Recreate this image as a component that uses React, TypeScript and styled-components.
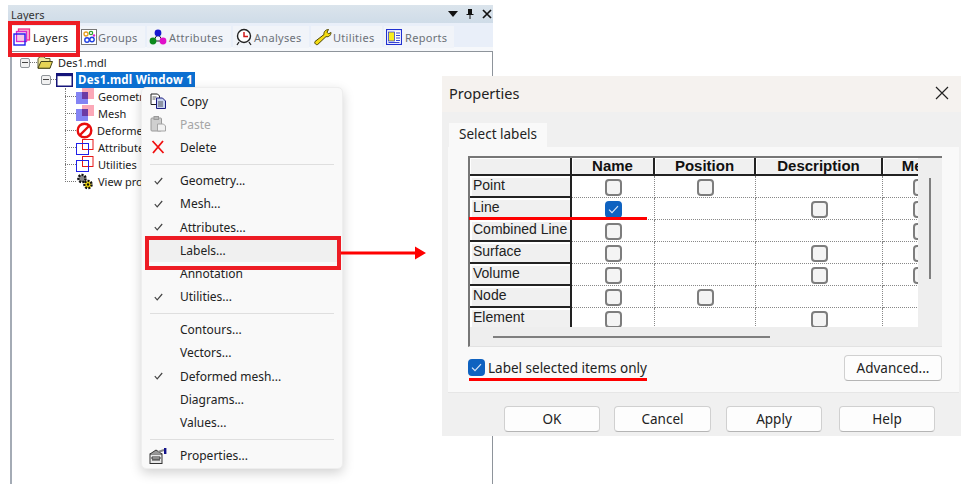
import React from "react";
import styled, { createGlobalStyle } from "styled-components";

const GlobalStyle = createGlobalStyle`
  html, body {
    margin: 0;
    padding: 0;
    background: #fff;
    font-family: "Noto Sans", "Open Sans", sans-serif;
  }
`;

const Page = styled.div`
  position: relative;
  width: 975px;
  height: 489px;
  overflow: hidden;
  background: #fff;
  padding: 5px 0 0 8px;
  box-sizing: border-box;
`;

/* ---------- left docked panel ---------- */

const Panel = styled.div`
  width: 485px;
  height: 479px;
  display: flex;
  flex-direction: column;
`;

const TitleBar = styled.div`
  height: 18px;
  flex: none;
  display: flex;
  align-items: center;
  padding: 0 1px 0 3px;
  background: linear-gradient(#dbe4ec, #cfdce8);
  color: #333;
  font-size: 11px;
`;

const TitleText = styled.span`
  flex: 1;
`;

const TitleButtons = styled.div`
  display: flex;
  align-items: center;
  gap: 8px;
`;

const TabBar = styled.div`
  height: 28px;
  flex: none;
  display: flex;
  padding: 3px 0 0 3px;
  box-sizing: border-box;
  background: linear-gradient(#e9eff9 0 24px, #f6f8fb 24px);
`;

const TabItem = styled.div<{ $w: number; $active?: boolean; $gap?: number }>`
  width: ${(p) => p.$w}px;
  height: ${(p) => (p.$active ? 25 : 22)}px;
  margin-right: 2px;
  flex: none;
  display: flex;
  align-items: center;
  gap: ${(p) => p.$gap ?? 2}px;
  padding: ${(p) => (p.$active ? "0 0 3px 2px" : "0 0 0 2px")};
  box-sizing: border-box;
  background: ${(p) => (p.$active ? "#fff" : "#f1f4f9")};
  color: ${(p) => (p.$active ? "#222" : "#6c7178")};
  font-size: 11px;
  letter-spacing: 0.3px;
`;

const TreeBox = styled.div`
  flex: 1;
  margin-left: 2px;
  padding-top: 2px;
  background: #fff;
  border-top: 1px solid #8e949b;
  border-left: 2px solid #a4abb5;
  border-right: 1px solid #8e949b;
  box-sizing: border-box;
  min-height: 0;
  font-size: 11px;
  color: #222;
`;

const TreeRow = styled.div<{ $indent: number }>`
  height: 17px;
  display: flex;
  align-items: center;
  padding-left: ${(p) => p.$indent}px;
`;

const ExpandBox = styled.span`
  width: 10px;
  height: 10px;
  flex: none;
  box-sizing: border-box;
  border: 1px solid #8f9499;
  border-radius: 2px;
  background: #f1f1f1;
  display: flex;
  align-items: center;
  justify-content: center;
  &::after {
    content: "";
    width: 6px;
    height: 1px;
    background: #444;
  }
`;

const Connector = styled.span<{ $w: number }>`
  width: ${(p) => p.$w}px;
  flex: none;
  border-top: 1px dotted #777;
`;

const TreeLabel = styled.span<{ $ml: number }>`
  margin-left: ${(p) => p.$ml}px;
  white-space: nowrap;
`;

const SelectedLabel = styled.span`
  margin-left: 3px;
  width: 119px;
  height: 16px;
  line-height: 16px;
  text-align: center;
  background: #0b6fd1;
  color: #fff;
  font-weight: 700;
  font-size: 11.5px;
  letter-spacing: 0.2px;
  white-space: nowrap;
`;

const ChildList = styled.div`
  position: relative;
  margin-left: 53px;
  &::before {
    content: "";
    position: absolute;
    left: 0;
    top: 0;
    bottom: 8px;
    border-left: 1px dotted #777;
  }
`;

/* ---------- context menu ---------- */

const ContextMenu = styled.div`
  position: absolute;
  left: 141px;
  top: 87px;
  width: 202px;
  height: 382px;
  box-sizing: border-box;
  padding-top: 1.5px;
  background: #f9f9f9;
  border: 1px solid #eeeeee;
  border-radius: 5px;
  box-shadow: 0 4px 12px rgba(0, 0, 0, 0.18);
  font-size: 12px;
  color: #222;
`;

const MenuItem = styled.div<{ $disabled?: boolean; $hover?: boolean }>`
  height: 23.2px;
  display: flex;
  align-items: center;
  margin: 0 4px;
  background: ${(p) => (p.$hover ? "#f0f0f0" : "transparent")};
  color: ${(p) => (p.$disabled ? "#a6a6a6" : "#222")};
`;

const MenuIcon = styled.span`
  width: 34px;
  flex: none;
  display: flex;
  align-items: center;
  justify-content: center;
  padding-right: 10px;
  box-sizing: border-box;
`;

const MenuSep = styled.div`
  height: 1px;
  margin: 4.5px 8px 4.5px 8px;
  background: #dfdfdf;
`;

/* ---------- properties dialog ---------- */

const Dialog = styled.div`
  position: absolute;
  left: 442px;
  top: 76px;
  width: 519px;
  height: 360px;
  background: #f0f0f0;
  border-radius: 0 5px 0 0;
  display: flex;
  flex-direction: column;
`;

const DialogTitle = styled.div`
  height: 36px;
  flex: none;
  display: flex;
  align-items: center;
  justify-content: space-between;
  padding: 0 12px 3px 7px;
  box-sizing: border-box;
  background: #f5f2ef;
  font-size: 14.5px;
  color: #222;
`;

const DialogTabs = styled.div`
  padding: 11px 0 0 7px;
`;

const DialogTab = styled.div`
  width: 98px;
  height: 24px;
  line-height: 23px;
  text-align: center;
  background: #f9f9f9;
  font-size: 13.5px;
  color: #222;
`;

const TabPage = styled.div`
  width: 511px;
  height: 246px;
  margin-left: 6px;
  flex: none;
  box-sizing: border-box;
  padding: 9px 17px 0 20px;
  background: #f9f9f9;
  border-bottom: 1px solid #e6e6e6;
`;

const GridBox = styled.div`
  width: 474px;
  height: 191px;
  display: flex;
  flex-direction: column;
  box-sizing: border-box;
  background: #eeeeee;
  border-top: 2px solid #777;
  border-left: 2px solid #777;
  border-bottom: 1px solid #e2e2e2;
`;

const GridTop = styled.div`
  height: 169px;
  flex: none;
  display: flex;
`;

const Table = styled.div`
  width: 448px;
  height: 169px;
  flex: none;
  overflow: hidden;
  background: #fff;
  display: grid;
  grid-template-columns: 102px 83px 101px 127px 78px;
  grid-template-rows: 18px repeat(7, 22px);
`;

const HeaderCell = styled.div`
  background: #f0f0f0;
  border-right: 2px solid #222;
  border-bottom: 2px solid #222;
  box-shadow: inset 1px 1px 0 #fff;
  box-sizing: border-box;
  text-align: center;
  line-height: 16px;
  font-family: "Liberation Sans", Arial, sans-serif;
  font-weight: 700;
  font-size: 15px;
  color: #111;
  overflow: hidden;
  white-space: nowrap;
`;

const RowHead = styled.div`
  background: #f0f0f0;
  border-right: 2px solid #222;
  border-bottom: 2px solid #222;
  box-shadow: inset 2px 2px 0 #fff;
  box-sizing: border-box;
  padding-left: 3px;
  line-height: 18px;
  font-family: "Liberation Sans", Arial, sans-serif;
  font-size: 14px;
  color: #222;
  white-space: nowrap;
`;

const Cell = styled.div`
  box-sizing: border-box;
  padding-top: 2px;
  border-right: 1px dotted #888;
  border-bottom: 1px dotted #888;
  display: flex;
  align-items: center;
  justify-content: center;
`;

const CheckBox = styled.span<{ $on?: boolean }>`
  width: 17px;
  height: 17px;
  flex: none;
  box-sizing: border-box;
  border-radius: 4px;
  border: 2px solid ${(p) => (p.$on ? "#0f62c0" : "#7d7d7d")};
  background: ${(p) => (p.$on ? "#0f62c0" : "#f4f4f4")};
  display: flex;
  align-items: center;
  justify-content: center;
`;

const VScrollTrack = styled.div`
  flex: 1;
  display: flex;
  justify-content: center;
  padding: 20px 1px 0 0;
`;

const VThumb = styled.div`
  width: 2px;
  height: 101px;
  background: #7f7f7f;
`;

const HScrollTrack = styled.div`
  flex: 1;
  padding: 9px 0 0 23px;
`;

const HThumb = styled.div`
  width: 277px;
  height: 2px;
  background: #7f7f7f;
`;

const OptionRow = styled.div`
  margin-top: 8px;
  width: 474px;
  height: 25px;
  display: flex;
  align-items: center;
  justify-content: space-between;
`;

const OptionLabel = styled.label`
  display: flex;
  align-items: center;
  gap: 3px;
  font-size: 13.5px;
  color: #222;
`;

const Button = styled.div<{ $w: number; $ml?: number }>`
  width: ${(p) => p.$w}px;
  height: 26px;
  margin-left: ${(p) => p.$ml ?? 0}px;
  box-sizing: border-box;
  border: 1px solid #d0d0d0;
  border-bottom-color: #b5b5b5;
  border-radius: 4px;
  background: #fdfdfd;
  text-align: center;
  line-height: 24px;
  font-size: 13.5px;
  color: #222;
`;

const ButtonRow = styled.div`
  display: flex;
  gap: 14px;
  padding: 13px 0 0 62px;
`;

/* ---------- red annotations over the screenshot ---------- */

const RedBox = styled.div<{ $l: number; $t: number; $w: number; $h: number }>`
  position: absolute;
  left: ${(p) => p.$l}px;
  top: ${(p) => p.$t}px;
  width: ${(p) => p.$w}px;
  height: ${(p) => p.$h}px;
  box-sizing: border-box;
  border: 4px solid #ed1c24;
`;

const RedLine = styled.div<{ $t: number }>`
  position: absolute;
  left: 469px;
  top: ${(p) => p.$t}px;
  width: 178px;
  height: 3px;
  background: #f00;
`;

const ArrowSvg = styled.svg`
  position: absolute;
  left: 341px;
  top: 245px;
`;

/* ---------- icons ---------- */

const Ico = styled.svg`
  flex: none;
  display: block;
`;

const LayersIcon = () => (
  <Ico width="18" height="19" viewBox="0 0 18 19">
    <rect x="5.5" y="1" width="11" height="11" fill="#fbb4d4" stroke="#f0308c" strokeWidth="1.3" />
    <rect x="3.5" y="3.5" width="10" height="10" fill="#f6c8ea" stroke="#d828d0" strokeWidth="1.3" />
    <rect x="1" y="6" width="11" height="11" fill="none" stroke="#2020f0" strokeWidth="1.4" />
  </Ico>
);

const GroupsIcon = () => (
  <Ico width="16" height="16" viewBox="0 0 16 16">
    <rect x="0.5" y="0.5" width="15" height="15" fill="#fff" stroke="#777" />
    <circle cx="5" cy="5" r="2" fill="none" stroke="#e8a020" strokeWidth="1.3" />
    <circle cx="10" cy="4" r="1.7" fill="none" stroke="#30a030" strokeWidth="1.2" />
    <circle cx="13" cy="6.5" r="1.2" fill="#e020d0" />
    <circle cx="6" cy="11" r="2.2" fill="none" stroke="#2040e0" strokeWidth="1.4" />
    <circle cx="11" cy="10.5" r="2.2" fill="none" stroke="#2040e0" strokeWidth="1.4" />
  </Ico>
);

const AttributesIcon = () => (
  <Ico width="18" height="16" viewBox="0 0 18 16">
    <path d="M9 5 4 12M9 5l5 7M4 12h10" stroke="#222" fill="none" />
    <circle cx="9" cy="4" r="3.4" fill="#1818d0" />
    <circle cx="4" cy="12" r="3.4" fill="#0c8a1c" />
    <circle cx="14" cy="12" r="3.4" fill="#e010c8" />
  </Ico>
);

const AnalysesIcon = () => (
  <Ico width="18" height="18" viewBox="0 0 18 18">
    <circle cx="9" cy="8" r="6.5" fill="#fff" stroke="#222" strokeWidth="1.4" />
    <path d="M9 4v4.5h4" fill="none" stroke="#d01818" strokeWidth="1.5" />
    <path d="M4 14l-2 3M14 14l2 3" stroke="#222" strokeWidth="1.3" />
  </Ico>
);

const WrenchIcon = () => (
  <Ico width="19" height="18" viewBox="0 0 19 18">
    <path
      d="M2 13.5 11 6.5C10.5 4 12.5 1.5 15.5 1.5L14 4.2l1.6 1.6L18 4.5C18 7.5 15.5 9.3 13 8.6L5 16.2C3.5 17.8.8 15 2 13.5Z"
      fill="#f4dc14"
      stroke="#4a4200"
      strokeWidth="1"
    />
  </Ico>
);

const ReportsIcon = () => (
  <Ico width="16" height="16" viewBox="0 0 16 16">
    <rect x="0.5" y="0.5" width="15" height="15" fill="#fff" stroke="#2030d0" strokeWidth="1.2" />
    <rect x="2.5" y="3" width="6" height="9" fill="#f8ee20" stroke="#2030d0" strokeWidth="0.7" />
    <path d="M10 4h4M10 6.5h4M10 9h4M10 11.5h4M2.5 13.5h11" stroke="#2030d0" strokeWidth="0.9" />
  </Ico>
);

const FolderIcon = () => (
  <Ico width="16" height="13" viewBox="0 0 16 13">
    <path d="M1 2.5 3 .8h4l1.5 1.7h4.5v9.7H1Z" fill="#f0e89c" stroke="#5a5a30" />
    <path d="M1 12.2 4 5.5h11.5l-2.5 6.7Z" fill="#e6d454" stroke="#44441c" />
  </Ico>
);

const WindowIcon = () => (
  <Ico width="17" height="14" viewBox="0 0 17 14">
    <rect x="0.75" y="0.75" width="15.5" height="12.5" fill="#fff" stroke="#15157a" strokeWidth="1.5" />
    <rect x="0.75" y="0.75" width="15.5" height="2.4" fill="#15157a" />
  </Ico>
);

const SolidLayerIcon = () => (
  <Ico width="18" height="17" viewBox="0 0 18 17">
    <rect x="6" y="0" width="12" height="11" fill="#fba8b8" />
    <rect x="0" y="4" width="12" height="12" fill="#8484f4" />
    <rect x="6" y="4" width="6" height="7" fill="#6c3aa4" />
  </Ico>
);

const NoIcon = () => (
  <Ico width="17" height="17" viewBox="0 0 17 17">
    <circle cx="8.5" cy="8.5" r="6.8" fill="#fff" stroke="#e80c0c" strokeWidth="2.4" />
    <path d="M4 13 13 4" stroke="#e80c0c" strokeWidth="2.4" />
  </Ico>
);

const OutlineLayerIcon = () => (
  <Ico width="18" height="17" viewBox="0 0 18 17">
    <rect x="6.5" y="0.5" width="10.5" height="10" fill="none" stroke="#e81818" />
    <rect x="0.5" y="4.5" width="12" height="11" fill="none" stroke="#2020e8" />
  </Ico>
);

const GearsIcon = () => (
  <Ico width="18" height="17" viewBox="0 0 18 17">
    <circle cx="6" cy="5.5" r="3.6" fill="#888" stroke="#111" strokeWidth="2.4" strokeDasharray="2 1.2" />
    <circle cx="12" cy="11.5" r="3.6" fill="#f2d80c" stroke="#111" strokeWidth="2.4" strokeDasharray="2 1.2" />
    <circle cx="12" cy="11.5" r="1.2" fill="#111" />
  </Ico>
);

const CopyIcon = () => (
  <Ico width="17" height="16" viewBox="0 0 17 16">
    <path d="M1 1h6.5l2 2v8.5H1Z" fill="#fff" stroke="#222" />
    <path d="M6.5 5h6l3 3v7.5h-9Z" fill="#c8d4f0" stroke="#1a1a80" />
    <path d="M8 9h5M8 11h5M8 13h5M2.5 4h4M2.5 6h3" stroke="#333" strokeWidth="0.8" />
  </Ico>
);

const PasteIcon = () => (
  <Ico width="17" height="16" viewBox="0 0 17 16">
    <rect x="1" y="2" width="10.5" height="13" rx="1" fill="#cfcfcf" stroke="#9a9a9a" />
    <rect x="4" y="0.5" width="4.5" height="3" fill="#b8b8b8" stroke="#9a9a9a" />
    <path d="M7.5 8h6l2 2v5h-8Z" fill="#f1f1f1" stroke="#a5a5a5" />
  </Ico>
);

const DeleteIcon = () => (
  <Ico width="14" height="14" viewBox="0 0 14 14">
    <path d="M1.5 1 12.5 13M12 1 2 13" stroke="#f01010" strokeWidth="1.8" fill="none" />
  </Ico>
);

const PropertiesIcon = () => (
  <Ico width="18" height="16" viewBox="0 0 18 16">
    <rect x="1" y="6" width="12" height="9.5" fill="#e8e8e8" stroke="#333" />
    <path d="M1 6 7 2l6 4" fill="#999" stroke="#333" />
    <path d="M3 9h8v2H3ZM3 12h8" stroke="#333" fill="none" />
    <path d="M9 4l6-2" stroke="#888" strokeWidth="2" />
    <rect x="15" y="0" width="2.4" height="6" fill="#12128a" />
  </Ico>
);

const MenuCheck = () => (
  <Ico width="9" height="8" viewBox="0 0 9 8">
    <path d="M.8 4.2 3.2 6.8 8.2 1" fill="none" stroke="#444" strokeWidth="1.2" />
  </Ico>
);

const BoxCheck = () => (
  <Ico width="11" height="9" viewBox="0 0 11 9">
    <path d="M1 4.6 4 7.6 10 1.2" fill="none" stroke="#dbe8f8" strokeWidth="1.2" />
  </Ico>
);

/* ---------- data ---------- */

const tabs = [
  { label: "Groups", w: 66, gap: 1, icon: <GroupsIcon /> },
  { label: "Attributes", w: 84, gap: 2, icon: <AttributesIcon /> },
  { label: "Analyses", w: 76, gap: 1, icon: <AnalysesIcon /> },
  { label: "Utilities", w: 71, gap: 1, icon: <WrenchIcon /> },
  { label: "Reports", w: 70, gap: 3, icon: <ReportsIcon /> },
];

const treeChildren = [
  { label: "Geometry", icon: <SolidLayerIcon /> },
  { label: "Mesh", icon: <SolidLayerIcon /> },
  { label: "Deformed mesh", icon: <NoIcon /> },
  { label: "Attributes", icon: <OutlineLayerIcon /> },
  { label: "Utilities", icon: <OutlineLayerIcon /> },
  { label: "View properties", icon: <GearsIcon /> },
];

// [name, position, description, last column]; 2 = ticked
const labelRows: [string, number, number, number, number][] = [
  ["Point", 1, 1, 0, 1],
  ["Line", 2, 0, 1, 1],
  ["Combined Line", 1, 0, 0, 1],
  ["Surface", 1, 0, 1, 1],
  ["Volume", 1, 0, 1, 1],
  ["Node", 1, 1, 0, 0],
  ["Element", 1, 0, 1, 0],
];

const Item = ({ text, check, hover }: { text: string; check?: boolean; hover?: boolean }) => (
  <MenuItem $hover={hover}>
    <MenuIcon>{check && <MenuCheck />}</MenuIcon>
    {text}
  </MenuItem>
);

const Tick = ({ v }: { v: number }) =>
  v === 0 ? null : <CheckBox $on={v === 2}>{v === 2 && <BoxCheck />}</CheckBox>;

const App = () => {
  return (
    <Page>
      <GlobalStyle />
      <Panel>
        <TitleBar>
          <TitleText>Layers</TitleText>
          <TitleButtons>
            <svg width="10" height="6" viewBox="0 0 10 6">
              <path d="M0 0h10L5 6Z" fill="#111" />
            </svg>
            <svg width="8" height="10" viewBox="0 0 8 10">
              <path d="M2 0h4v5h1.5v1H4.5v4h-1V6H.5V5H2Z" fill="#111" />
            </svg>
            <svg width="10" height="10" viewBox="0 0 10 10">
              <path d="M1 1l8 8M9 1 1 9" stroke="#111" strokeWidth="1.7" />
            </svg>
          </TitleButtons>
        </TitleBar>
        <TabBar>
          <TabItem $w={66} $active $gap={2}>
            <LayersIcon />
            Layers
          </TabItem>
          {tabs.map((t) => (
            <TabItem key={t.label} $w={t.w} $gap={t.gap}>
              {t.icon}
              {t.label}
            </TabItem>
          ))}
        </TabBar>
        <TreeBox>
          <TreeRow $indent={8}>
            <ExpandBox />
            <Connector $w={7} />
            <FolderIcon />
            <TreeLabel $ml={5}>Des1.mdl</TreeLabel>
          </TreeRow>
          <TreeRow $indent={29}>
            <ExpandBox />
            <Connector $w={5} />
            <WindowIcon />
            <SelectedLabel>Des1.mdl Window 1</SelectedLabel>
          </TreeRow>
          <ChildList>
            {treeChildren.map((c) => (
              <TreeRow key={c.label} $indent={0}>
                <Connector $w={11} />
                {c.icon}
                <TreeLabel $ml={4}>{c.label}</TreeLabel>
              </TreeRow>
            ))}
          </ChildList>
        </TreeBox>
      </Panel>

      <ContextMenu>
        <MenuItem>
          <MenuIcon>
            <CopyIcon />
          </MenuIcon>
          Copy
        </MenuItem>
        <MenuItem $disabled>
          <MenuIcon>
            <PasteIcon />
          </MenuIcon>
          Paste
        </MenuItem>
        <MenuItem>
          <MenuIcon>
            <DeleteIcon />
          </MenuIcon>
          Delete
        </MenuItem>
        <MenuSep />
        <Item text="Geometry..." check />
        <Item text="Mesh..." check />
        <Item text="Attributes..." check />
        <Item text="Labels..." hover />
        <Item text="Annotation" />
        <Item text="Utilities..." check />
        <MenuSep />
        <Item text="Contours..." />
        <Item text="Vectors..." />
        <Item text="Deformed mesh..." check />
        <Item text="Diagrams..." />
        <Item text="Values..." />
        <MenuSep />
        <MenuItem>
          <MenuIcon>
            <PropertiesIcon />
          </MenuIcon>
          Properties...
        </MenuItem>
      </ContextMenu>

      <Dialog>
        <DialogTitle>
          Properties
          <svg width="14" height="14" viewBox="0 0 14 14">
            <path d="M1 1l12 12M13 1 1 13" stroke="#222" strokeWidth="1.2" />
          </svg>
        </DialogTitle>
        <DialogTabs>
          <DialogTab>Select labels</DialogTab>
        </DialogTabs>
        <TabPage>
          <GridBox>
            <GridTop>
              <Table>
                <HeaderCell />
                <HeaderCell>Name</HeaderCell>
                <HeaderCell>Position</HeaderCell>
                <HeaderCell>Description</HeaderCell>
                <HeaderCell>Mesh</HeaderCell>
                {labelRows.map(([name, a, b, c, d]) => (
                  <React.Fragment key={name}>
                    <RowHead>{name}</RowHead>
                    <Cell>
                      <Tick v={a} />
                    </Cell>
                    <Cell>
                      <Tick v={b} />
                    </Cell>
                    <Cell>
                      <Tick v={c} />
                    </Cell>
                    <Cell>
                      <Tick v={d} />
                    </Cell>
                  </React.Fragment>
                ))}
              </Table>
              <VScrollTrack>
                <VThumb />
              </VScrollTrack>
            </GridTop>
            <HScrollTrack>
              <HThumb />
            </HScrollTrack>
          </GridBox>
          <OptionRow>
            <OptionLabel>
              <CheckBox $on>
                <BoxCheck />
              </CheckBox>
              Label selected items only
            </OptionLabel>
            <Button $w={98}>Advanced...</Button>
          </OptionRow>
        </TabPage>
        <ButtonRow>
          <Button $w={96}>OK</Button>
          <Button $w={97}>Cancel</Button>
          <Button $w={96} $ml={1}>Apply</Button>
          <Button $w={96} $ml={3}>Help</Button>
        </ButtonRow>
      </Dialog>

      <RedBox $l={8} $t={21} $w={72} $h={36} />
      <RedBox $l={145} $t={236} $w={196} $h={34} />
      <RedLine $t={217} />
      <RedLine $t={378} />
      <ArrowSvg width="86" height="16" viewBox="0 0 86 16">
        <path d="M0 6.5h74V1.5L85 8 74 14.5V9.5H0Z" fill="#f00" />
      </ArrowSvg>
    </Page>
  );
};

export default App;
